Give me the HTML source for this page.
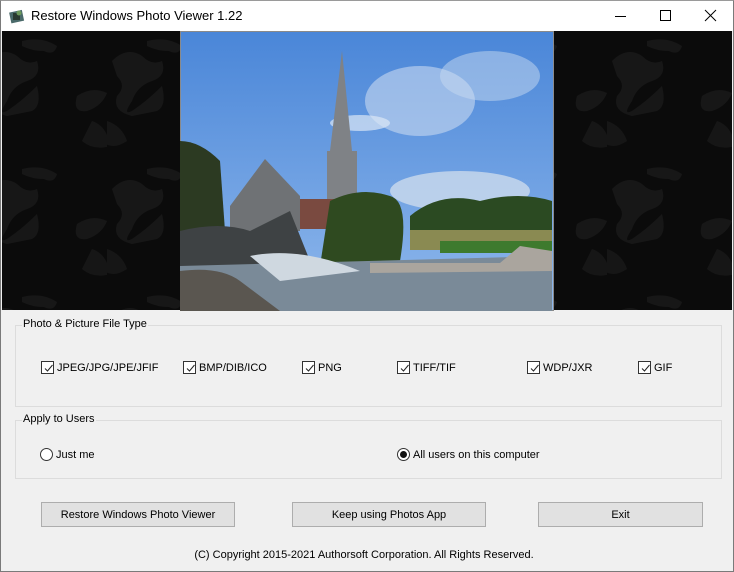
<!DOCTYPE html>
<html><head><style>
*{margin:0;padding:0;box-sizing:border-box}
body{width:734px;height:572px;background:#f0f0f0;font-family:"Liberation Sans",sans-serif;font-size:11px;color:#000;position:relative;overflow:hidden}
.win{position:absolute;left:0;top:0;width:734px;height:572px;border:1px solid #7a7a7a;border-top-color:#9a9a9a}
.title{position:absolute;left:1px;top:1px;width:732px;height:30px;background:#fff}
.title span{position:absolute;left:30px;top:7px;font-size:13px}
.abs{position:absolute}
.grp{position:absolute;border:1px solid #dcdcdc}
.grp .lg{position:absolute;left:6px;top:-8px;background:#f0f0f0;padding:0 1px}
.cb{position:absolute;width:13px;height:13px;border:1px solid #333;background:#fff}
.cb svg{position:absolute;left:1px;top:1px}
.lbl{position:absolute}
.btn{position:absolute;height:25px;background:#e1e1e1;border:1px solid #adadad;text-align:center;line-height:24px}
.rb{position:absolute;width:13px;height:13px;border:1px solid #333;border-radius:50%;background:#fff}
</style></head><body>
<div class="win"></div>
<div class="title">
<svg class="abs" style="left:8px;top:7px" width="16" height="16"><rect x="1" y="3" width="13" height="11" fill="#4a6a6a" transform="rotate(-12 8 8)"/><rect x="4" y="5" width="7" height="7" fill="#2a3a30"/><circle cx="10" cy="5" r="2.5" fill="#6c9a5a"/></svg>
<span>Restore Windows Photo Viewer 1.22</span>
<svg class="abs" style="left:612px;top:8px" width="110" height="14" stroke="#000" fill="none" stroke-width="1"><path d="M2 7.5H13"/><rect x="47.5" y="1.5" width="10" height="10"/><path d="M92 1L103 12M103 1L92 12"/></svg>
</div>
<svg class="abs" style="left:2px;top:31px" width="730" height="279">
<defs><pattern id="p" width="125" height="128" patternUnits="userSpaceOnUse" x="-20" y="0">
<rect width="125" height="128" fill="#0b0b0b"/>
<path d="M5 30 Q20 15 35 25 Q45 35 55 30 Q60 45 45 50 Q30 55 25 70 Q15 85 25 80 Q40 70 55 55 Q60 75 50 80 L25 85 Q5 80 10 65 Q20 55 10 45 Z" fill="#171717"/>
<path d="M40 10 Q60 5 75 15 Q72 25 62 20 Q50 20 40 15Z" fill="#171717"/>
<path d="M95 65 Q110 55 125 62 Q120 75 105 80 Q90 82 95 65Z" fill="#171717"/>
<path d="M110 90 Q125 95 128 115 Q112 120 100 110Z" fill="#161616"/>
<path d="M0 90 Q15 95 20 110 Q5 120 -5 110Z" fill="#161616"/>
</pattern></defs>
<rect width="730" height="279" fill="url(#p)"/>
</svg>
<svg class="abs" style="left:180px;top:31px" width="374" height="280">
<defs><linearGradient id="s" x1="0" y1="0" x2="0" y2="1"><stop offset="0" stop-color="#4a86d8"/><stop offset="1" stop-color="#8fb8ec"/></linearGradient></defs>
<rect width="374" height="280" fill="#8a8a8a"/>
<rect x="1" y="1" width="372" height="278" fill="url(#s)"/>
<ellipse cx="240" cy="70" rx="55" ry="35" fill="#c8d9f0" opacity=".6"/>
<ellipse cx="310" cy="45" rx="50" ry="25" fill="#c8d9f0" opacity=".5"/>
<ellipse cx="280" cy="160" rx="70" ry="20" fill="#d8e2ee" opacity=".7"/>
<ellipse cx="180" cy="92" rx="30" ry="8" fill="#dbe7f5" opacity=".7"/>
<path d="M162 20 L150 120 L147 120 L147 170 L177 170 L177 120 L172 120 Z" fill="#7f8286"/>
<path d="M50 175 L85 128 L120 165 L120 200 L50 200Z" fill="#6f7275"/>
<rect x="120" y="168" width="50" height="30" fill="#7a4a40"/>
<path d="M0 110 Q20 110 40 130 L45 200 L0 220Z" fill="#2c3a22"/>
<path d="M150 170 Q180 155 210 165 Q230 170 220 230 L140 235Z" fill="#2f4a20"/>
<path d="M230 185 Q260 160 300 170 Q340 160 372 170 L372 205 L230 205Z" fill="#2b4a22"/>
<rect x="230" y="199" width="142" height="20" fill="#8a8a52"/>
<rect x="260" y="210" width="112" height="12" fill="#3e7a2e"/>
<path d="M0 200 Q40 190 70 200 L110 180 L130 230 L0 240Z" fill="#3e4244"/>
<path d="M0 235 L372 225 L372 280 L0 280Z" fill="#7a8a98"/>
<path d="M70 225 Q120 215 180 240 L100 250Z" fill="#cfd8e0"/>
<path d="M0 240 Q40 235 60 250 L100 280 L0 280Z" fill="#5a5650"/>
<path d="M190 232 L320 232 L340 215 L372 220 L372 240 L190 242Z" fill="#aaa59e"/>
</svg>
<div class="grp" style="left:15px;top:325px;width:707px;height:82px"><span class="lg">Photo &amp; Picture File Type</span></div>
<div class="cb" style="left:41px;top:361px"><svg width="11" height="11"><path d="M2 5.5L4.5 8L9.5 2" stroke="#222" fill="none"/></svg></div><span class="lbl" style="left:57px;top:362px">JPEG/JPG/JPE/JFIF</span>
<div class="cb" style="left:183px;top:361px"><svg width="11" height="11"><path d="M2 5.5L4.5 8L9.5 2" stroke="#222" fill="none"/></svg></div><span class="lbl" style="left:199px;top:362px">BMP/DIB/ICO</span>
<div class="cb" style="left:302px;top:361px"><svg width="11" height="11"><path d="M2 5.5L4.5 8L9.5 2" stroke="#222" fill="none"/></svg></div><span class="lbl" style="left:318px;top:362px">PNG</span>
<div class="cb" style="left:397px;top:361px"><svg width="11" height="11"><path d="M2 5.5L4.5 8L9.5 2" stroke="#222" fill="none"/></svg></div><span class="lbl" style="left:413px;top:362px">TIFF/TIF</span>
<div class="cb" style="left:527px;top:361px"><svg width="11" height="11"><path d="M2 5.5L4.5 8L9.5 2" stroke="#222" fill="none"/></svg></div><span class="lbl" style="left:543px;top:362px">WDP/JXR</span>
<div class="cb" style="left:638px;top:361px"><svg width="11" height="11"><path d="M2 5.5L4.5 8L9.5 2" stroke="#222" fill="none"/></svg></div><span class="lbl" style="left:654px;top:362px">GIF</span>
<div class="grp" style="left:15px;top:420px;width:707px;height:59px"><span class="lg">Apply to Users</span></div>
<div class="rb" style="left:40px;top:448px"></div><span class="lbl" style="left:56px;top:449px">Just me</span>
<div class="rb" style="left:397px;top:448px"><div style="position:absolute;left:2px;top:2px;width:7px;height:7px;border-radius:50%;background:#111"></div></div><span class="lbl" style="left:413px;top:449px">All users on this computer</span>
<div class="btn" style="left:41px;top:502px;width:194px">Restore Windows Photo Viewer</div>
<div class="btn" style="left:292px;top:502px;width:194px">Keep using Photos App</div>
<div class="btn" style="left:538px;top:502px;width:165px">Exit</div>
<div class="abs" style="left:0;top:549px;width:728px;text-align:center">(C) Copyright 2015-2021 Authorsoft Corporation. All Rights Reserved.</div>
</body></html>
